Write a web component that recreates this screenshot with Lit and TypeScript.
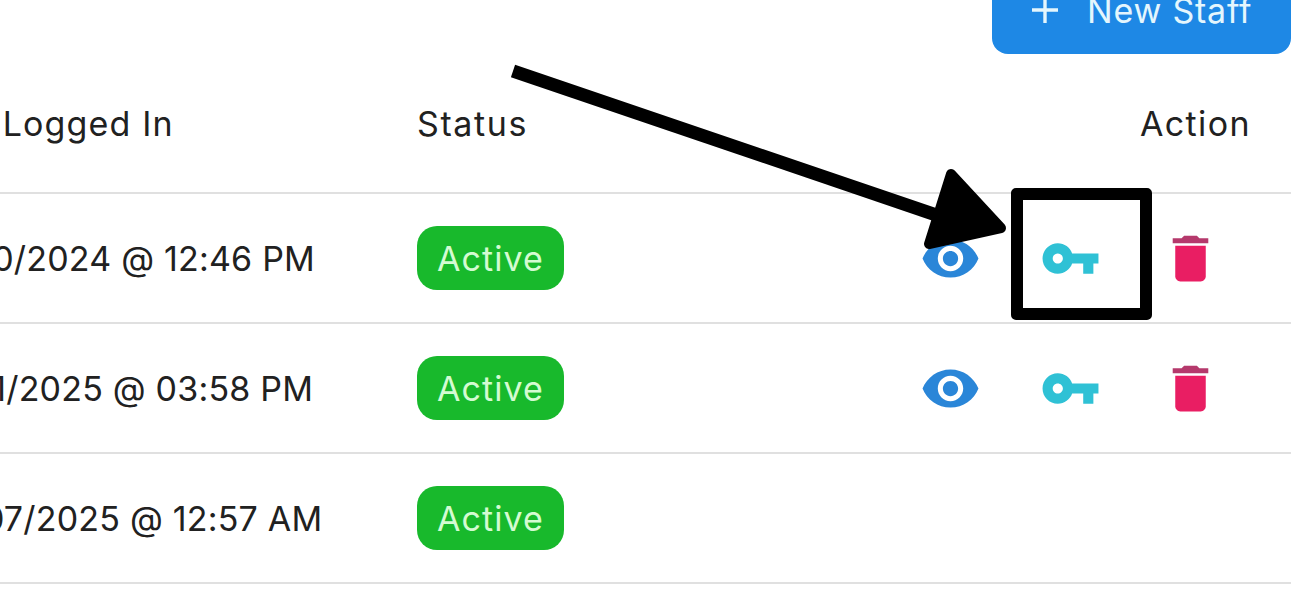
import { LitElement, css, html, nothing, svg } from "lit";
import { customElement } from "lit/decorators.js";

const rows = [
  { date: "10/10/2024 @ 12:46 PM", actions: true },
  { date: "11/01/2025 @ 03:58 PM", actions: true },
  { date: "07/07/2025 @ 12:57 AM", actions: false },
];

const eye = svg`<path d="M12 4.5C7 4.5 2.73 7.61 1 12c1.73 4.39 6 7.5 11 7.5s9.27-3.11 11-7.5c-1.73-4.39-6-7.5-11-7.5zM12 17c-2.76 0-5-2.24-5-5s2.24-5 5-5 5 2.24 5 5-2.24 5-5 5zm0-8c-1.66 0-3 1.34-3 3s1.34 3 3 3 3-1.34 3-3-1.34-3-3-3z"/>`;
const key = svg`<path d="M12.65 10C11.83 7.67 9.61 6 7 6c-3.31 0-6 2.69-6 6s2.69 6 6 6c2.61 0 4.83-1.67 5.65-4H17v4h4v-4h2v-4H12.65zM7 14c-1.1 0-2-.9-2-2s.9-2 2-2 2 .9 2 2-.9 2-2 2z"/>`;
const trash = svg`<path d="M6 19c0 1.1.9 2 2 2h8c1.1 0 2-.9 2-2V7H6v12z"/><path class="lid" d="M19 4h-3.5l-1-1h-5l-1 1H5v2h14V4z"/>`;

@customElement("app-root")
export class AppRoot extends LitElement {
  static override styles = css`
    :host {
      display: block;
      position: relative;
      width: 1315px;
      height: 604px;
      overflow: hidden;
      background: #fff;
      color: #212121;
      font-family: Inter, "Open Sans", sans-serif;
      font-size: 34px;
      letter-spacing: 1.1px;
    }

    .toolbar {
      display: flex;
      justify-content: flex-end;
      padding-right: 24px;
      margin-top: -34px;
    }

    .new-staff {
      display: flex;
      align-items: center;
      gap: 29px;
      width: 299px;
      height: 88px;
      box-sizing: border-box;
      padding-left: 40px;
      border: 0;
      border-radius: 16px;
      background: #1e88e5;
      color: #e4f6fd;
      font: inherit;
      letter-spacing: 0.8px;
    }

    .new-staff svg {
      width: 26px;
      height: 26px;
      flex: none;
    }

    .table {
      margin-right: 24px;
    }

    .row {
      display: grid;
      grid-template-columns: 508px 1fr auto;
      align-items: center;
      height: 128px;
      margin-left: -91px;
      border-bottom: 2px solid #e0e0e0;
    }

    .row.head {
      height: 138px;
      letter-spacing: 1.6px;
    }

    .row.head .logged {
      margin-left: 11px;
      letter-spacing: 1.15px;
    }

    .row.head .action {
      padding-right: 40px;
      letter-spacing: 1.4px;
    }

    .date {
      margin-left: 21px;
      letter-spacing: 0.2px;
      white-space: nowrap;
    }

    .badge {
      display: inline-flex;
      align-items: center;
      justify-content: center;
      width: 147px;
      height: 64px;
      border-radius: 20px;
      background: #18b92c;
      color: #d4fbd2;
    }

    .icons {
      display: flex;
      gap: 59px;
      padding-right: 69.75px;
    }

    .icons svg {
      display: block;
      width: 61px;
      height: 61px;
    }

    .view { fill: #2a86d8; }
    .reset { fill: #2fc1d5; }
    .remove { fill: #e91e63; }
    .remove .lid { fill: #b5396c; }

    /* annotation drawn over the table */
    .marker {
      position: absolute;
      left: 1011px;
      top: 188px;
      width: 141px;
      height: 132px;
      box-sizing: border-box;
      border: 12px solid #000;
      border-radius: 5px;
    }

    .arrow {
      position: absolute;
      left: 0;
      top: 0;
      width: 1315px;
      height: 604px;
      pointer-events: none;
    }
  `;

  override render() {
    return html`
      <div class="toolbar">
        <button class="new-staff">
          <svg viewBox="0 0 26 26" fill="none" stroke="currentColor" stroke-width="3.4">
            <path d="M13 0v26M0 13h26" />
          </svg>
          New Staff
        </button>
      </div>
      <div class="table">
        <div class="row head">
          <span class="logged">Last Logged In</span>
          <span>Status</span>
          <span class="action">Action</span>
        </div>
        ${rows.map(
          (row) => html`
            <div class="row">
              <span class="date">${row.date}</span>
              <span><span class="badge">Active</span></span>
              ${row.actions
                ? html`<div class="icons">
                    <svg class="view" viewBox="0 0 24 24">${eye}</svg>
                    <svg class="reset" viewBox="0 0 24 24">${key}</svg>
                    <svg class="remove" viewBox="0 0 24 24">${trash}</svg>
                  </div>`
                : nothing}
            </div>
          `
        )}
      </div>
      <div class="marker"></div>
      <svg class="arrow" viewBox="0 0 1315 604">
        <path d="M513 71L945 218" stroke="#000" stroke-width="13" />
        <path
          d="M951 174L1001 228L929 244Z"
          fill="#000"
          stroke="#000"
          stroke-width="10"
          stroke-linejoin="round"
        />
      </svg>
    `;
  }
}
